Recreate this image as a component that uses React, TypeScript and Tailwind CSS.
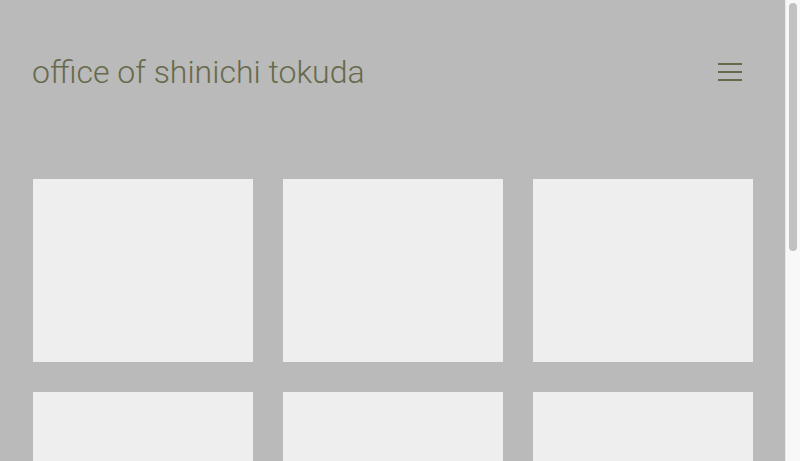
import React from "react";

const tiles = Array.from({ length: 9 }, (_, i) => i);

export default function App() {
  return (
    <div
      className="flex h-[461px] w-full overflow-hidden bg-[#bababa]"
      style={{ fontFamily: "Roboto, 'Liberation Sans', sans-serif" }}
    >
      <div className="min-w-0 flex-1">
        <header className="flex h-[144px] items-center justify-between pl-[32px] pr-[43px]">
          <h1 className="text-[32px] font-light leading-none text-[#676a4a]">
            office of shinichi tokuda
          </h1>
          <button className="flex h-[20px] w-[24px] flex-col justify-between py-[1px]" aria-label="menu">
            <span className="block h-[2px] w-full bg-[#676a4a]" />
            <span className="block h-[2px] w-full bg-[#676a4a]" />
            <span className="block h-[2px] w-full bg-[#676a4a]" />
          </button>
        </header>
        <main className="grid grid-cols-3 gap-[30px] px-[32.5px] pt-[35px] pb-[60px]">
          {tiles.map((i) => (
            <div key={i} className="h-[183px] bg-[#eeeeee]" />
          ))}
        </main>
      </div>
      {/* page scrollbar */}
      <div className="flex w-[15px] shrink-0 flex-col border-l border-[#e8e8e8] bg-[#f8f8f8] pt-[3px] pl-[3px] pr-[3px]">
        <div className="h-[248px] w-[8px] rounded-full bg-[#c1c1c1]" />
      </div>
    </div>
  );
}
